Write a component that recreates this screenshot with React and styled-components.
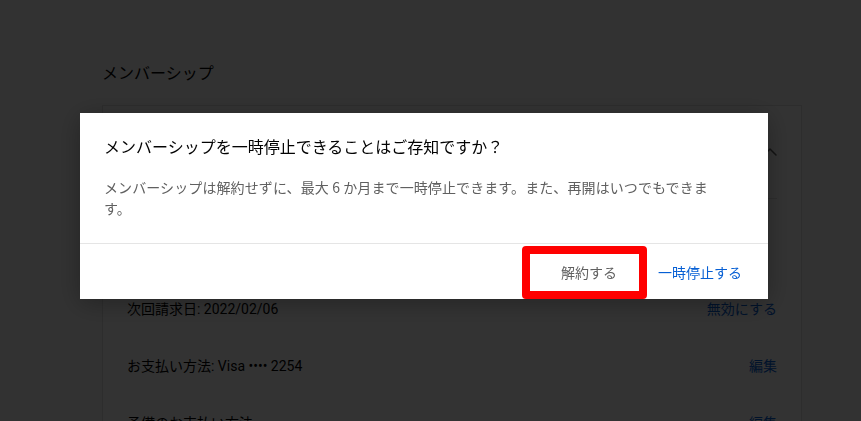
import { ChevronUp } from "lucide-react";
import styled, { createGlobalStyle } from "styled-components";

const GlobalStyle = createGlobalStyle`
  html, body {
    margin: 0;
    padding: 0;
    background: #f9f9f9;
    height: 421px;
    overflow: hidden;
  }
  body {
    font-family: Roboto, "Noto Sans CJK JP", "Noto Sans", sans-serif;
    color: #030303;
  }
`;

const rows = [
  { label: "次回請求日: 2022/02/06", action: "無効にする" },
  { label: "お支払い方法: Visa •••• 2254", action: "編集" },
  { label: "予備のお支払い方法", action: "編集" },
];

const App = () => {
  return (
    <>
      <GlobalStyle />
      <Page>
        <PageTitle>メンバーシップ</PageTitle>
        <Card>
          <CardHead>
            <ChevronUp size={24} strokeWidth={1.5} color="#606060" />
          </CardHead>
          <Divider />
          <RowList>
            <Row />
            {rows.map((row) => (
              <Row key={row.label}>
                <span>{row.label}</span>
                <RowLink>{row.action}</RowLink>
              </Row>
            ))}
          </RowList>
        </Card>
      </Page>

      <Overlay>
        <Dialog role="dialog" aria-modal="true">
          <DialogBody>
            <DialogTitle>
              メンバーシップを一時停止できることはご存知ですか？
            </DialogTitle>
            <DialogText>
              メンバーシップは解約せずに、最大 6
              か月まで一時停止できます。また、再開はいつでもできます。
            </DialogText>
          </DialogBody>
          <DialogFooter>
            <DialogButton $primary={false}>解約する</DialogButton>
            <DialogButton $primary>一時停止する</DialogButton>
            <Highlight aria-hidden="true" />
          </DialogFooter>
        </Dialog>
      </Overlay>
    </>
  );
};

const Page = styled.main`
  padding: 61px 0 0 102px;
`;

const PageTitle = styled.h1`
  margin: 0 0 22px;
  font-family: "Noto Sans CJK JP", sans-serif;
  font-size: 16px;
  line-height: 22px;
  font-weight: 400;
  color: #030303;
`;

const Card = styled.section`
  box-sizing: border-box;
  width: 700px;
  background: #ffffff;
  border: 1px solid #e0e0e0;
  border-bottom: none;
`;

const CardHead = styled.div`
  height: 92px;
  display: flex;
  align-items: center;
  justify-content: flex-end;
  padding: 0 19px;
`;

const Divider = styled.div`
  height: 1px;
  margin: 0 24px;
  background: #e0e0e0;
`;

const RowList = styled.div`
  padding-top: 23px;
`;

const Row = styled.div`
  height: 57px;
  display: flex;
  align-items: center;
  justify-content: space-between;
  padding: 0 24px;
  font-size: 14px;
  color: #030303;
`;

const RowLink = styled.span`
  color: #065fd4;
`;

const Overlay = styled.div`
  position: fixed;
  inset: 0;
  background: rgba(0, 0, 0, 0.8);
`;

const Dialog = styled.div`
  position: absolute;
  left: 80px;
  top: 113px;
  width: 688px;
  background: #ffffff;
  box-shadow: 0 4px 24px rgba(0, 0, 0, 0.3);
  font-family: "Noto Sans CJK JP", sans-serif;
`;

const DialogBody = styled.div`
  padding: 22px 24px 24px;
  border-bottom: 1px solid #e5e5e5;
`;

const DialogTitle = styled.h2`
  margin: 0;
  font-size: 16px;
  line-height: 22px;
  font-weight: 400;
  color: #030303;
`;

const DialogText = styled.p`
  margin: 20px 0 0;
  max-width: 618px;
  font-size: 14px;
  line-height: 21px;
  letter-spacing: 0.1px;
  color: #606060;
`;

const DialogFooter = styled.div`
  position: relative;
  height: 55px;
  display: flex;
  align-items: center;
  justify-content: flex-end;
  gap: 9px;
  padding: 0 10px;
`;

const DialogButton = styled.button`
  border: none;
  background: transparent;
  padding: 9px 16px;
  font-family: "Noto Sans CJK JP", sans-serif;
  font-size: 14px;
  line-height: 20px;
  color: ${(p) => (p.$primary ? "#065fd4" : "#606060")};
  cursor: pointer;
`;

const Highlight = styled.span`
  position: absolute;
  top: 2px;
  bottom: 0;
  right: 121px;
  width: 125px;
  box-sizing: border-box;
  border: 8px solid #ff0000;
  border-radius: 4px;
  pointer-events: none;
`;

export default App;
